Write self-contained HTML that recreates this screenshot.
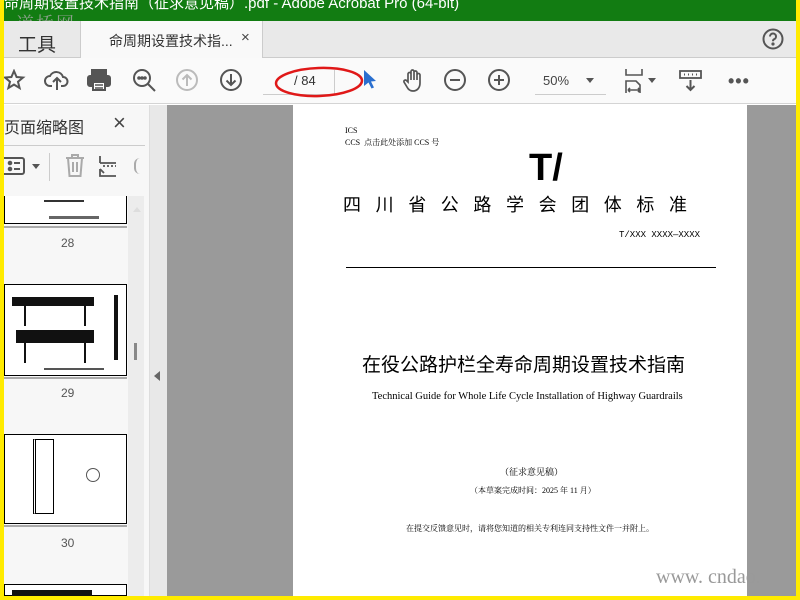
<!DOCTYPE html>
<html><head><meta charset="utf-8"><style>
*{margin:0;padding:0;box-sizing:border-box}
body{width:800px;height:600px;overflow:hidden;background:#ffeb00;font-family:"Liberation Sans","Noto Sans CJK SC",sans-serif;position:relative}
.a{position:absolute}
.ic{position:absolute;fill:none;stroke:#555;stroke-width:2}
.cn{font-family:"Liberation Serif","Noto Serif CJK SC",serif;color:#000}
</style></head><body>
<div class="a" style="left:4px;top:0;width:792px;height:596px;background:#fff;overflow:hidden">
 <!-- title bar -->
 <div class="a" style="left:0;top:0;width:792px;height:21px;background:#127c12;color:#fff;font-size:15px;line-height:8px;white-space:nowrap;overflow:hidden;padding-left:0">命周期设置技术指南（征求意见稿）.pdf - Adobe Acrobat Pro (64-bit)</div>
 <div class="a" style="left:12px;top:10px;font-size:18px;color:#aaa;font-family:'Noto Serif CJK SC',serif;letter-spacing:2px;opacity:.8">道桥网</div>
 <!-- tab bar -->
 <div class="a" style="left:0;top:21px;width:792px;height:37px;background:#e9e9e9;border-bottom:1px solid #ccc"></div>
 <div class="a" style="left:14px;top:30px;font-size:19px;color:#333">工具</div>
 <div class="a" style="left:76px;top:21px;width:183px;height:37px;background:#f9f9f9;border-left:1px solid #ccc;border-right:1px solid #ccc"></div>
 <div class="a" style="left:105px;top:31px;font-size:14px;color:#333">命周期设置技术指...</div>
 <div class="a" style="left:237px;top:29px;font-size:15px;color:#444">×</div>
 <svg class="ic" style="left:758px;top:28px" width="22" height="22"><circle cx="11" cy="11" r="9.5"/><path d="M8 8.5a3 3 0 1 1 4 2.8c-1 .5-1 1-1 2" /><circle cx="11" cy="16" r=".6" fill="#555"/></svg>
 <!-- toolbar -->
 <div class="a" style="left:0;top:58px;width:792px;height:46px;background:#fafafa;border-bottom:1px solid #d4d4d4"></div>
 <svg class="ic" style="left:0;top:69px" width="22" height="22"><path d="M10 2l2.6 6 6.4.5-5 4.2 1.6 6.3L10 15.6 4.4 19 6 12.7 1 8.5l6.4-.5z"/></svg>
 <svg class="ic" style="left:40px;top:68px" width="26" height="24"><path d="M8 18H6a5 5 0 0 1 0-10 7 7 0 0 1 13 1 4.5 4.5 0 0 1 0 9h-2M13 22V11M9 14l4-4 4 4"/></svg>
 <svg class="ic" style="left:82px;top:68px" width="26" height="24"><rect x="6" y="2" width="14" height="5" fill="#555"/><rect x="2" y="8" width="22" height="10" rx="2" fill="#555"/><rect x="7" y="14" width="12" height="8" fill="#fff"/><path d="M9 17h8M9 20h8" stroke-width="1.5"/></svg>
 <svg class="ic" style="left:128px;top:68px" width="26" height="26"><circle cx="10" cy="10" r="8"/><path d="M16 16l7 7"/><circle cx="7" cy="10" r=".8" fill="#555"/><circle cx="10" cy="10" r=".8" fill="#555"/><circle cx="13" cy="10" r=".8" fill="#555"/></svg>
 <svg class="ic" style="left:172px;top:69px;stroke:#bbb" width="24" height="24"><circle cx="11" cy="11" r="10"/><path d="M11 17V6M6.5 10.5L11 6l4.5 4.5"/></svg>
 <svg class="ic" style="left:216px;top:69px" width="24" height="24"><circle cx="11" cy="11" r="10"/><path d="M11 5v11M6.5 11.5L11 16l4.5-4.5"/></svg>
 <div class="a" style="left:259px;top:94px;width:72px;height:1px;background:#ccc"></div>
 <div class="a" style="left:330px;top:70px;width:1px;height:24px;background:#ccc"></div>
 <div class="a" style="left:290px;top:73px;font-size:13px;color:#333">/ 84</div>
 <svg class="a" style="left:268px;top:65px" width="100" height="36"><ellipse cx="47" cy="17" rx="43" ry="14" fill="none" stroke="#e01818" stroke-width="2.5" transform="rotate(-2 47 17)"/></svg>
 <svg class="a" style="left:358px;top:69px" width="16" height="22"><path d="M2 1l12 11-5 .5 3 6-2.5 1-3-6L2 17z" fill="#2a6fcf"/></svg>
 <svg class="ic" style="left:398px;top:68px" width="24" height="26"><path d="M6 14V6a1.5 1.5 0 0 1 3 0v6V3.5a1.5 1.5 0 0 1 3 0V12V4.5a1.5 1.5 0 0 1 3 0V12V7a1.5 1.5 0 0 1 3 0v8c0 5-3 8-7 8-3 0-5-2-6-4l-3-5a1.5 1.5 0 0 1 2.5-1.5z" stroke-width="1.7"/></svg>
 <svg class="ic" style="left:440px;top:69px" width="24" height="24"><circle cx="11" cy="11" r="10"/><path d="M6 11h10"/></svg>
 <svg class="ic" style="left:484px;top:69px" width="24" height="24"><circle cx="11" cy="11" r="10"/><path d="M6 11h10M11 6v10"/></svg>
 <div class="a" style="left:531px;top:94px;width:71px;height:1px;background:#ccc"></div>
 <div class="a" style="left:539px;top:73px;font-size:13px;color:#444">50%</div>
 <div class="a" style="left:582px;top:78px;border:4px solid transparent;border-top:5px solid #555"></div>
 <svg class="ic" style="left:620px;top:68px" width="22" height="26"><path d="M2 1v6h16V1M2 25v-12h10l4 4v8M4 22h12M4 22l2-2M4 22l2 2M16 22l-2-2M16 22l-2 2" stroke-width="1.6"/></svg>
 <div class="a" style="left:644px;top:78px;border:4px solid transparent;border-top:5px solid #555"></div>
 <svg class="ic" style="left:675px;top:69px" width="24" height="24"><rect x="1" y="2" width="21" height="7" stroke-width="1.8"/><path d="M5 5.5h1M9 5.5h1M13 5.5h1M17 5.5h1M11.5 11v10M7.5 17l4 4 4-4"/></svg>
 <div class="a" style="left:724px;top:79px;font-size:18px;line-height:4px;color:#555;letter-spacing:1px;font-weight:bold">•••</div>
 <!-- left panel -->
 <div class="a" style="left:0;top:105px;width:145px;height:491px;background:#f7f7f7"></div>
 <div class="a" style="left:0;top:114px;font-size:16px;color:#333">页面缩略图</div>
 <div class="a" style="left:109px;top:110px;font-size:22px;color:#444">×</div>
 <div class="a" style="left:0;top:145px;width:141px;height:1px;background:#ccc"></div>
 <svg class="ic" style="left:0;top:155px" width="24" height="22"><rect x="-2" y="3" width="22" height="16" rx="2"/><circle cx="6" cy="8" r="1.3" fill="#555"/><circle cx="6" cy="14" r="1.3" fill="#555"/><path d="M10 8h6M10 14h6"/></svg>
 <div class="a" style="left:28px;top:164px;border:4px solid transparent;border-top:5px solid #555"></div>
 <div class="a" style="left:45px;top:153px;width:1px;height:28px;background:#ccc"></div>
 <svg class="ic" style="left:60px;top:154px;stroke:#aaa" width="22" height="24"><path d="M2 4h18M8 4V1h6v3M4 4l1.5 18h11L18 4M9 8v10M13 8v10"/></svg>
 <svg class="ic" style="left:94px;top:155px" width="20" height="22"><path d="M2 1v7M2 8h16M5 11h2M9 11h2M13 11h2M17 11h1M2 14v7h16M2 14l4 4" stroke-width="1.8"/></svg>
 <div class="a" style="left:130px;top:158px;width:6px;height:16px;border-left:2px solid #aaa;border-radius:8px 0 0 8px"></div>
 <!-- thumbnails -->
 <div class="a" style="left:0;top:196px;width:123px;height:28px;border:1px solid #000;border-top:none;background:#fff"></div>
 <div class="a" style="left:40px;top:200px;width:40px;height:2px;background:#333"></div>
 <div class="a" style="left:45px;top:216px;width:50px;height:3px;background:#666"></div>
 <div class="a" style="left:0;top:226px;width:123px;height:2px;background:#aaa"></div>
 <div class="a" style="left:57px;top:236px;font-size:12px;color:#555">28</div>
 <div class="a" style="left:0;top:284px;width:123px;height:92px;border:1px solid #000;background:#fff"></div>
 <div class="a" style="left:8px;top:297px;width:82px;height:9px;background:#111"></div>
 <div class="a" style="left:12px;top:330px;width:78px;height:13px;background:#111"></div>
 <div class="a" style="left:110px;top:295px;width:4px;height:65px;background:#111"></div>
 <div class="a" style="left:20px;top:306px;width:2px;height:20px;background:#111"></div>
 <div class="a" style="left:80px;top:306px;width:2px;height:20px;background:#111"></div>
 <div class="a" style="left:20px;top:343px;width:2px;height:20px;background:#111"></div>
 <div class="a" style="left:80px;top:343px;width:2px;height:20px;background:#111"></div>
 <div class="a" style="left:40px;top:368px;width:60px;height:2px;background:#555"></div>
 <div class="a" style="left:0;top:377px;width:123px;height:2px;background:#aaa"></div>
 <div class="a" style="left:57px;top:386px;font-size:12px;color:#555">29</div>
 <div class="a" style="left:0;top:434px;width:123px;height:90px;border:1px solid #000;background:#fff"></div>
 <div class="a" style="left:29px;top:439px;width:21px;height:75px;border:1px solid #000;border-left:3px double #000"></div>
 <div class="a" style="left:82px;top:468px;width:14px;height:14px;border:1px solid #555;border-radius:50%"></div>
 <div class="a" style="left:0;top:525px;width:123px;height:2px;background:#aaa"></div>
 <div class="a" style="left:57px;top:536px;font-size:12px;color:#555">30</div>
 <div class="a" style="left:0;top:584px;width:123px;height:12px;border:1px solid #000;background:#fff"></div>
 <div class="a" style="left:8px;top:590px;width:80px;height:6px;background:#111"></div>
 <!-- scrollbar -->
 <div class="a" style="left:124px;top:196px;width:16px;height:400px;background:#ececec"></div>
 <div class="a" style="left:129px;top:203px;border:4px solid transparent;border-bottom:5px solid #ddd"></div>
 <div class="a" style="left:130px;top:343px;width:3px;height:17px;background:#888"></div>
 <!-- divider -->
 <div class="a" style="left:145px;top:105px;width:18px;height:491px;background:#e8e8e8;border-left:1px solid #ddd"></div>
 <div class="a" style="left:150px;top:371px;border:5px solid transparent;border-right:6px solid #666;border-left:none"></div>
 <!-- doc area -->
 <div class="a" style="left:163px;top:105px;width:629px;height:491px;background:#9a9a9a"></div>
 <div class="a cn" style="left:289px;top:105px;width:454px;height:491px;background:#fff">
  <div class="a" style="left:52px;top:21px;font-size:8px">ICS</div>
  <div class="a" style="left:52px;top:32px;font-size:8px">CCS&nbsp; 点击此处添加 CCS 号</div>
  <div class="a" style="left:236px;top:43px;font-size:38px;font-weight:bold;font-family:'Liberation Sans',sans-serif;line-height:40px">T/</div>
  <div class="a" style="left:50px;top:86px;font-size:18px;letter-spacing:14.6px;font-family:'Liberation Sans','Noto Sans CJK SC',sans-serif;white-space:nowrap">四川省公路学会团体标准</div>
  <div class="a" style="left:326px;top:125px;font-size:9px;font-family:'Liberation Mono',monospace">T/XXX XXXX—XXXX</div>
  <div class="a" style="left:53px;top:162px;width:370px;height:1px;background:#000"></div>
  <div class="a" style="left:69px;top:245px;font-size:19px;font-family:'Liberation Sans','Noto Sans CJK SC',sans-serif;white-space:nowrap">在役公路护栏全寿命周期设置技术指南</div>
  <div class="a" style="left:79px;top:286px;font-size:10.5px;white-space:nowrap">Technical Guide for Whole Life Cycle Installation of Highway Guardrails</div>
  <div class="a" style="left:207px;top:360px;font-size:9px">（征求意见稿）</div>
  <div class="a" style="left:177px;top:380px;font-size:8px;white-space:nowrap">（本草案完成时间：2025 年 11 月）</div>
  <div class="a" style="left:113px;top:418px;font-size:8px;white-space:nowrap">在提交反馈意见时，请将您知道的相关专利连同支持性文件一并附上。</div>
 </div>
 <div class="a" style="left:652px;top:566px;font-size:20px;color:#999;font-family:'Liberation Serif',serif;white-space:nowrap">www. cndao.</div>
</div>
</body></html>
